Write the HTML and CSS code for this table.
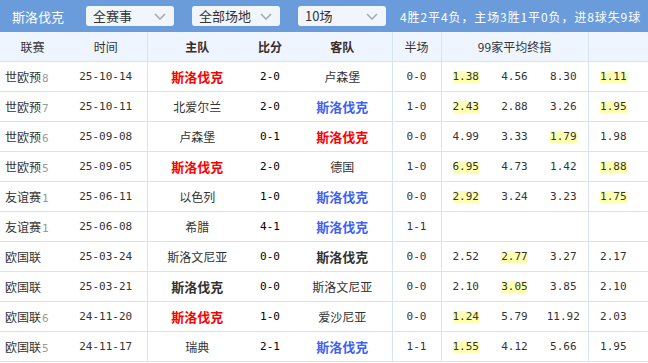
FILE: index.html
```html
<!DOCTYPE html>
<html lang="zh">
<head>
<meta charset="utf-8">
<link rel="stylesheet" href="styles.css">
</head>
<body>
<div class="bar">
  <span class="team">斯洛伐克</span>
  <div class="sel"><span>全赛事</span><svg width="12" height="7" viewBox="0 0 12 7"><polyline points="1,1 6,6 11,1" fill="none" stroke="#a9a9a9" stroke-width="1.6"/></svg></div>
  <div class="sel"><span>全部场地</span><svg width="12" height="7" viewBox="0 0 12 7"><polyline points="1,1 6,6 11,1" fill="none" stroke="#a9a9a9" stroke-width="1.6"/></svg></div>
  <div class="sel"><span>10场</span><svg width="12" height="7" viewBox="0 0 12 7"><polyline points="1,1 6,6 11,1" fill="none" stroke="#a9a9a9" stroke-width="1.6"/></svg></div>
  <span class="sum">4胜2平4负，主场3胜1平0负，进8球失9球</span>
</div>
<table class="tbl">
  <colgroup>
    <col class="c-lg"><col class="c-time"><col class="c-home"><col class="c-score"><col class="c-away"><col class="c-half"><col class="c-odd"><col class="c-odd"><col class="c-odd"><col class="c-last">
  </colgroup>
  <thead>
    <tr>
      <th>联赛</th><th class="vl">时间</th><th class="b">主队</th><th class="b">比分</th><th class="b vl">客队</th><th class="vl">半场</th><th colspan="3" class="vl">99家平均终指</th><th></th>
    </tr>
  </thead>
  <tbody>
    <tr><td class="lg">世欧预<i>8</i></td><td class="num vl">25-10-14</td><td class="t red">斯洛伐克</td><td class="num sc">2-0</td><td class="vl">卢森堡</td><td class="num vl">0-0</td><td class="num"><span class="hl">1.38</span></td><td class="num">4.56</td><td class="num vl">8.30</td><td class="num last"><span class="hl">1.11</span></td></tr>
    <tr><td class="lg">世欧预<i>7</i></td><td class="num vl">25-10-11</td><td>北爱尔兰</td><td class="num sc">2-0</td><td class="t blue vl">斯洛伐克</td><td class="num vl">1-0</td><td class="num"><span class="hl">2.43</span></td><td class="num">2.88</td><td class="num vl">3.26</td><td class="num last"><span class="hl">1.95</span></td></tr>
    <tr><td class="lg">世欧预<i>6</i></td><td class="num vl">25-09-08</td><td>卢森堡</td><td class="num sc">0-1</td><td class="t red vl">斯洛伐克</td><td class="num vl">0-0</td><td class="num">4.99</td><td class="num">3.33</td><td class="num vl"><span class="hl">1.79</span></td><td class="num last">1.98</td></tr>
    <tr><td class="lg">世欧预<i>5</i></td><td class="num vl">25-09-05</td><td class="t red">斯洛伐克</td><td class="num sc">2-0</td><td class="vl">德国</td><td class="num vl">1-0</td><td class="num"><span class="hl">6.95</span></td><td class="num">4.73</td><td class="num vl">1.42</td><td class="num last"><span class="hl">1.88</span></td></tr>
    <tr><td class="lg">友谊赛<i>1</i></td><td class="num vl">25-06-11</td><td>以色列</td><td class="num sc">1-0</td><td class="t blue vl">斯洛伐克</td><td class="num vl">0-0</td><td class="num"><span class="hl">2.92</span></td><td class="num">3.24</td><td class="num vl">3.23</td><td class="num last"><span class="hl">1.75</span></td></tr>
    <tr><td class="lg">友谊赛<i>1</i></td><td class="num vl">25-06-08</td><td>希腊</td><td class="num sc">4-1</td><td class="t blue vl">斯洛伐克</td><td class="num vl">1-1</td><td class="num"></td><td class="num"></td><td class="num vl"></td><td class="num last"></td></tr>
    <tr><td class="lg">欧国联</td><td class="num vl">25-03-24</td><td>斯洛文尼亚</td><td class="num sc">0-0</td><td class="t dark vl">斯洛伐克</td><td class="num vl">0-0</td><td class="num">2.52</td><td class="num"><span class="hl">2.77</span></td><td class="num vl">3.27</td><td class="num last">2.17</td></tr>
    <tr><td class="lg">欧国联</td><td class="num vl">25-03-21</td><td class="t dark">斯洛伐克</td><td class="num sc">0-0</td><td class="vl">斯洛文尼亚</td><td class="num vl">0-0</td><td class="num">2.10</td><td class="num"><span class="hl">3.05</span></td><td class="num vl">3.85</td><td class="num last">2.10</td></tr>
    <tr><td class="lg">欧国联<i>6</i></td><td class="num vl">24-11-20</td><td class="t red">斯洛伐克</td><td class="num sc">1-0</td><td class="vl">爱沙尼亚</td><td class="num vl">0-0</td><td class="num"><span class="hl">1.24</span></td><td class="num">5.79</td><td class="num vl">11.92</td><td class="num last">2.03</td></tr>
    <tr><td class="lg">欧国联<i>5</i></td><td class="num vl">24-11-17</td><td>瑞典</td><td class="num sc">2-1</td><td class="t blue vl">斯洛伐克</td><td class="num vl">1-1</td><td class="num"><span class="hl">1.55</span></td><td class="num">4.12</td><td class="num vl">5.66</td><td class="num last">1.95</td></tr>
  </tbody>
</table>
</body>
</html>
```
FILE: styles.css
```css
html, body {
  margin: 0;
  padding: 0;
  background: #ffffff;
}
body {
  width: 648px;
  font-family: "Noto Sans CJK SC", "Noto Sans", sans-serif;
  color: #333333;
  font-size: 12px;
}
.bar {
  height: 32px;
  background: #6a9cdc;
  display: flex;
  align-items: center;
  box-sizing: border-box;
  padding: 0 0 0 12px;
}
.team {
  color: #ffffff;
  font-size: 13px;
  width: 74px;
  white-space: nowrap;
}
.sel {
  width: 88px;
  height: 20px;
  box-sizing: border-box;
  background: #f1f6fd;
  border-radius: 3px;
  display: flex;
  align-items: center;
  justify-content: space-between;
  padding: 0 8px 0 7px;
  margin-right: 18px;
  font-size: 13px;
  color: #333333;
}
.sel span {
  line-height: 20px;
}
.sum {
  color: #ffffff;
  font-size: 12px;
  margin-left: -4px;
  white-space: nowrap;
  letter-spacing: 0.9px;
}
.tbl {
  width: 648px;
  border-collapse: collapse;
  table-layout: fixed;
}
.c-lg { width: 65px; }
.c-time { width: 82px; }
.c-home { width: 100px; }
.c-score { width: 46px; }
.c-away { width: 99px; }
.c-half { width: 49px; }
.c-odd { width: 49px; }
.c-last { width: 60px; }
.tbl th {
  height: 29px;
  padding: 0;
  background: #eef5ff;
  font-weight: normal;
  font-size: 12px;
  color: #333333;
  border-bottom: 1px solid #d4e3f5;
  text-align: center;
  white-space: nowrap;
}
.tbl th.b {
  font-weight: bold;
  color: #3a2a2a;
}
.tbl td {
  height: 29px;
  padding: 0;
  text-align: center;
  border-bottom: 1px solid #d4e3f5;
  white-space: nowrap;
  font-size: 12px;
  color: #333333;
}
.tbl .vl {
  border-right: 1px solid #d4e3f5;
}
.tbl td.lg {
  text-align: left;
  padding-left: 5px;
}
.lg i {
  font-style: normal;
  color: #999999;
  font-family: "DejaVu Sans Mono", monospace;
  font-size: 11px;
  margin-left: 1px;
}
.tbl td.num {
  font-family: "DejaVu Sans Mono", monospace;
  font-size: 11px;
}
.tbl td.sc {
  color: #000000;
}
.tbl td.last {
  padding-right: 10px;
}
.hl {
  background: #ffffb0;
  display: inline-block;
  line-height: 12px;
}
.tbl td.t {
  font-weight: bold;
  font-size: 13px;
}
.red { color: #ff0000 !important; }
.blue { color: #3f5ff7 !important; }
.dark { color: #333333 !important; }
```
